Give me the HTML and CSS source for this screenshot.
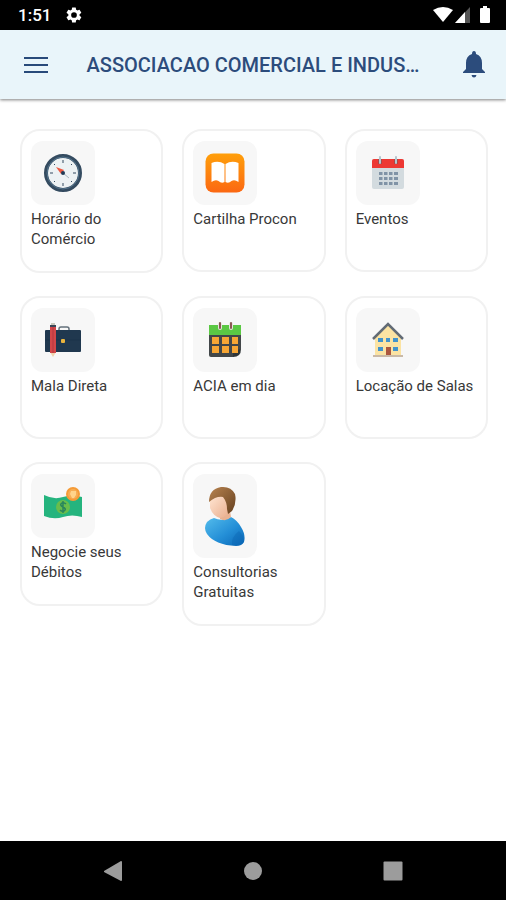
FILE: index.html
```html
<!DOCTYPE html>
<html lang="pt-BR">
<head>
<meta charset="utf-8">
<meta name="viewport" content="width=device-width, initial-scale=1">
<title>Associação Comercial</title>
<link rel="stylesheet" href="styles.css">
</head>
<body>
<div class="status-bar">
  <div class="status-group">
    <span class="clock">1:51</span>
    <svg class="gear" viewBox="0 0 24 24" aria-hidden="true"><path fill="#fff" fill-rule="evenodd" d="M19.4 13a7.500 7.500 0 0 0 0-2l2.100-1.600a.5.5 0 0 0 .1-.7l-2-3.400a.5.5 0 0 0-.6-.2l-2.500 1a7.300 7.300 0 0 0-1.700-1l-.4-2.700a.5.5 0 0 0-.5-.4h-4a.5.5 0 0 0-.5.4L9 5.100a7.300 7.300 0 0 0-1.700 1l-2.500-1a.5.5 0 0 0-.6.2l-2 3.400a.5.5 0 0 0 .1.700L4.500 11a7.500 7.500 0 0 0 0 2l-2.200 1.600a.5.5 0 0 0-.1.700l2 3.400c.1.200.4.300.6.200l2.500-1a7.300 7.300 0 0 0 1.700 1l.4 2.700c0 .2.200.4.500.4h4c.2 0 .5-.2.500-.4l.4-2.700a7.300 7.300 0 0 0 1.700-1l2.500 1c.2.100.5 0 .6-.2l2-3.400a.5.5 0 0 0-.1-.7zM12 15.800a3.800 3.800 0 1 1 0-7.600 3.800 3.800 0 0 1 0 7.600z"/></svg>
  </div>
  <svg class="signals" viewBox="0 0 58 18" aria-hidden="true">
    <path fill="#fff" d="M1 4Q11 -2 21 4L11 16z"/>
    <path fill="#555" d="M38 1v16H23z"/>
    <path fill="#fff" d="M33 6v11H23z"/>
    <path fill="#fff" d="M49 2h2V0h4v2h2q1 0 1 1v13q0 1-1 1h-8q-1 0-1-1V3q0-1 1-1z"/>
  </svg>
</div>
<header class="app-bar">
  <button class="bar-button" type="button" aria-label="Menu">
    <svg width="24" height="18" viewBox="0 0 24 18"><path fill="#284a7a" d="M0 1h24v2H0zM0 8h24v2H0zM0 15h24v2H0z"/></svg>
  </button>
  <h1 class="title">ASSOCIACAO COMERCIAL E INDUS…</h1>
  <button class="bar-button" type="button" aria-label="Notificações">
    <svg width="22" height="27" viewBox="0 0 22 27"><path fill="#2c4c7c" d="M11 0q2 0 2 3 6 2 6 9v6l3 3v1H0v-1l3-3v-6q0-7 6-9 0-3 2-3zM8.500 24h5q-.5 2.500-2.500 2.500T8.500 24z"/></svg>
  </button>
</header>
<main class="grid">
  <a class="card" href="#horario">
    <span class="tile"><svg width="40" height="40" viewBox="0 0 40 40">
      <circle cx="20" cy="20" r="17" fill="#edf2f4" stroke="#344b60" stroke-width="4"/>
      <circle cx="20" cy="20" r="16" fill="none" stroke="#55758e" stroke-width="1"/>
      <path stroke="#344b60" stroke-width="1" d="M20 7v3M20 30v3M7 20h3M30 20h3M11 11l1 1M28 28l1 1M11 29l1-1M28 12l1-1"/>
      <path stroke="#aab5bd" d="M20 20l6 5"/>
      <path fill="#ed5840" d="M13 14l8 3-3 4z"/>
      <circle cx="20" cy="20" r="2" fill="#203a56"/>
    </svg></span>
    <span class="label">Horário do Comércio</span>
  </a>
  <a class="card" href="#cartilha">
    <span class="tile"><svg width="40" height="40" viewBox="0 0 40 40">
      <defs><linearGradient id="orange" x2="0" y2="1"><stop stop-color="#ff9f0a"/><stop offset="1" stop-color="#fb6812"/></linearGradient></defs>
      <rect width="39" height="39" x=".5" y=".5" rx="8" fill="url(#orange)"/>
      <path fill="#fff" d="M19.500 11q-6-4-13-1v19q4-3 7-1 3 3 6 1zM20.500 11q6-4 13-1v19q-4-3-7-1-3 3-6 1z"/>
    </svg></span>
    <span class="label">Cartilha Procon</span>
  </a>
  <a class="card" href="#eventos">
    <span class="tile"><svg width="32" height="34" viewBox="0 0 32 34">
      <rect y="3" width="32" height="30" rx="2" fill="#d3dbdf"/>
      <path fill="#ed3833" d="M0 12V5q0-2 2-2h28q2 0 2 2v7z"/>
      <path stroke="#a84848" stroke-width="4" d="M8 3v5M24 3v5"/>
      <path stroke="#b5c5ce" stroke-width="2" stroke-linecap="round" d="M8 1v6M24 1v6"/>
      <path stroke="#8093a6" stroke-width="3" stroke-dasharray="4 1" d="M7 17.500h19M7 22.500h19M7 27.500h19"/>
      <path stroke="#d3dbdf" stroke-width="1" d="M11 16v13M16 16v13M21 16v13"/>
    </svg></span>
    <span class="label">Eventos</span>
  </a>
  <a class="card" href="#mala">
    <span class="tile"><svg width="38" height="38" viewBox="0 0 38 38">
      <path fill="none" stroke="#64717c" stroke-width="1.500" d="M15 9V8q0-2 2-2h6q2 0 2 2v1"/>
      <rect x="1" y="9" width="36" height="22" rx="1" fill="#20384f"/>
      <path stroke="#1b334a" d="M1 19h36"/>
      <rect x="17" y="18" width="4" height="4" rx="1" fill="#e8b33d"/>
      <path fill="#f2d4ad" d="M6 31h6l-3 5z"/>
      <path fill="#d34749" d="M6 5h6v27H6z"/>
      <path fill="#c43f44" d="M8 5h2v27H8z"/>
      <path fill="#394657" d="M6 4h6v2H6z"/>
      <path fill="#c8c8bb" d="M7 2h4v2H7z"/>
    </svg></span>
    <span class="label">Mala Direta</span>
  </a>
  <a class="card" href="#acia">
    <span class="tile"><svg width="34" height="38" viewBox="0 0 34 38">
      <path fill="#424749" d="M1 14h32v14l-8 8H3q-2 0-2-2z"/>
      <path fill="#5bc844" d="M1 4h32v10H1z"/>
      <path fill="#303638" d="M25 36v-6l8-2q0 8-8 8z"/>
      <path stroke="#e4e4dc" stroke-width="4" stroke-linecap="round" d="M12 3v4M23 3v4"/>
      <path stroke="#8c5755" stroke-width="2" stroke-linecap="round" d="M12 2v5M23 2v5"/>
      <path fill="#f7a634" d="M4 16h7v7H4zM14 16h7v7h-7zM24 16h6v7h-6zM4 25h7v7H4zM14 25h7v7h-7zM24 25h6v7h-6z"/>
    </svg></span>
    <span class="label">ACIA em dia</span>
  </a>
  <a class="card" href="#salas">
    <span class="tile"><svg width="32" height="36" viewBox="0 0 32 36">
      <path fill="#fbe3a3" d="M3 14L16 3l13 11v20H3z"/>
      <path fill="none" stroke="#626b75" stroke-width="2.500" d="M1 17L16 2l15 15"/>
      <path stroke="#c9b9a7" stroke-width="2" d="M1 34h30"/>
      <path fill="#4293cc" d="M6 16h5v4H6zM14 16h4v4h-4zM21 16h5v4h-5zM6 25h5v4H6zM21 25h5v4h-5z"/>
      <path fill="#ab573f" d="M14 25h5v8h-5z"/>
    </svg></span>
    <span class="label">Locação de Salas</span>
  </a>
  <a class="card" href="#debitos">
    <span class="tile"><svg width="40" height="40" viewBox="0 0 40 40">
      <path fill="#25b47e" d="M1 9q10 5 19 2 9-3 19 0v20q-10-3-19 0-9 3-19-1z"/>
      <circle cx="20" cy="21" r="7" fill="#68bd4b"/>
      <path fill="none" stroke="#28855d" stroke-width="1.500" d="M23 18q-2-2-4-1-3 2 1 4 4 2 1 4-2 1-4-1M20 15v12"/>
      <circle cx="30" cy="8" r="7" fill="#f59b37"/>
      <circle cx="30" cy="8" r="5" fill="#f7ad55"/>
      <path fill="#ffd38b" d="M28 5h5v4l-2 3h-2l-2-4z"/>
    </svg></span>
    <span class="label">Negocie seus Débitos</span>
  </a>
  <a class="card" href="#consultorias">
    <span class="tile"><svg width="40" height="60" viewBox="0 0 40 60">
      <defs>
        <linearGradient id="shirt" x2="1" y2="1"><stop stop-color="#55bdec"/><stop offset=".55" stop-color="#248fd7"/><stop offset="1" stop-color="#0966b5"/></linearGradient>
        <linearGradient id="skin" x2="1" y2="1"><stop stop-color="#ffe5d2"/><stop offset="1" stop-color="#e8ac8b"/></linearGradient>
        <linearGradient id="hair" x2="1" y2="1"><stop stop-color="#b98450"/><stop offset="1" stop-color="#65401f"/></linearGradient>
      </defs>
      <path fill="url(#shirt)" d="M9 32q8 4 17-1 6 3 10 10 5 8 3 15-2 4-8 4-21-1-29-12-4-6 0-12 3-3 7-4z"/>
      <path fill="#0965b2" opacity=".4" d="M27 59q-1-8 7-14l4 5 1 6q-4 4-12 3z"/>
      <path fill="#e9b292" d="M15 28l10-3 1 6q-5 5-11 2z"/>
      <path fill="url(#skin)" d="M5 13q8-6 17-1l3 10q-2 9-10 10-7-2-10-10z"/>
      <path fill="url(#hair)" d="M4 16Q4 3 16 1q10-1 14 7 2 9-3 17l-4 3-1-5q0-7-4-12Q11 10 4 16z"/>
    </svg></span>
    <span class="label">Consultorias Gratuitas</span>
  </a>
</main>
<nav class="system-nav" aria-label="Sistema">
  <button type="button" aria-label="Voltar"><svg width="20" height="22" viewBox="0 0 20 22"><path fill="#9c9c9c" d="M18 1q1 0 1 1v18q0 1-1 1L1 12v-1z"/></svg></button>
  <button type="button" aria-label="Início"><svg width="20" height="20" viewBox="0 0 20 20"><circle cx="10" cy="10" r="9" fill="#9c9c9c"/></svg></button>
  <button type="button" aria-label="Recentes"><svg width="20" height="20" viewBox="0 0 20 20"><rect width="19" height="19" x=".5" y=".5" rx="1" fill="#9c9c9c"/></svg></button>
</nav>
</body>
</html>
```
FILE: styles.css
```css
* {
  box-sizing: border-box;
}

body {
  display: flex;
  flex-direction: column;
  min-height: 100vh;
  margin: 0;
  background: #fff;
  color: #383838;
  font-family: Roboto, "Liberation Sans", sans-serif;
}

button {
  display: grid;
  place-items: center;
  padding: 0;
  border: 0;
  background: none;
}

svg {
  display: block;
}

.status-bar {
  display: flex;
  align-items: center;
  justify-content: space-between;
  height: 30px;
  padding: 0 16px 0 18px;
  background: #000;
}

.status-group {
  display: flex;
  align-items: center;
  gap: 14px;
}

.clock {
  color: #fff;
  font-size: 17px;
  font-weight: 500;
  line-height: 30px;
}

.gear {
  width: 18px;
  height: 18px;
}

.signals {
  width: 58px;
  height: 18px;
}

.app-bar {
  display: grid;
  grid-template-columns: 72px 1fr 64px;
  align-items: center;
  height: 69px;
  background: #e9f5fa;
  box-shadow: 0 1px 3px rgba(0, 0, 0, 0.5);
}

.bar-button {
  height: 48px;
}

.title {
  margin: 0;
  padding-right: 8px;
  overflow: hidden;
  color: #2c4c7c;
  font-size: 20px;
  font-weight: 500;
  line-height: 24px;
  text-align: center;
  white-space: nowrap;
}

.grid {
  display: grid;
  flex: 1;
  grid-template-columns: repeat(3, 1fr);
  align-content: start;
  align-items: start;
  gap: 23px 19px;
  padding: 30px 18px 30px 20px;
}

.card {
  display: flex;
  flex-direction: column;
  align-items: flex-start;
  gap: 4px;
  min-height: 143px;
  padding: 10px 9px 22px;
  border: 2px solid #f1f1f1;
  border-radius: 20px;
  color: inherit;
  text-decoration: none;
}

.tile {
  display: grid;
  place-items: center;
  width: 64px;
  min-height: 64px;
  padding: 12px 0;
  border-radius: 12px;
  background: #f7f7f7;
}

.label {
  font-size: 15px;
  line-height: 20px;
}

.system-nav {
  display: flex;
  align-items: center;
  justify-content: center;
  gap: 92px;
  height: 59px;
  background: #000;
}

.system-nav button {
  width: 48px;
  height: 48px;
}
```
